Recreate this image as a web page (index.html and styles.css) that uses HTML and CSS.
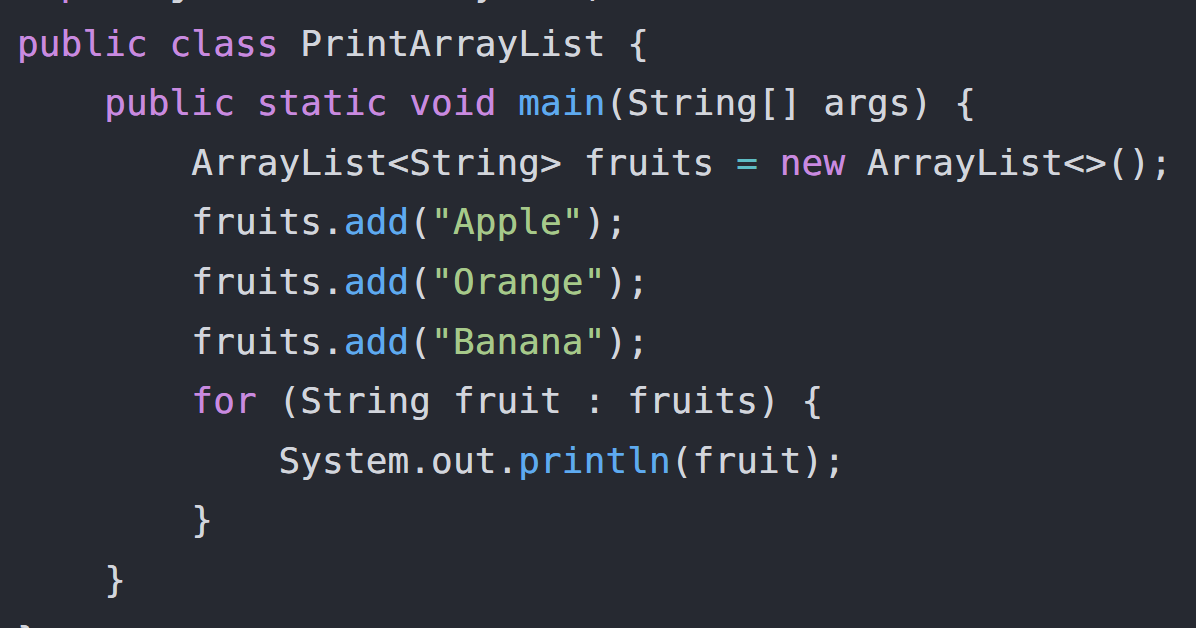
FILE: index.html
```html
<!DOCTYPE html>
<html lang="en">
<head>
<meta charset="utf-8">
<title>PrintArrayList.java</title>
<link rel="stylesheet" href="styles.css">
</head>
<body>
<main class="editor">
<pre class="code"><code><span class="kw">import</span> java.util.ArrayList;
<span class="kw">public</span> <span class="kw">class</span> PrintArrayList {
    <span class="kw">public</span> <span class="kw">static</span> <span class="kw">void</span> <span class="fn">main</span>(String[] args) {
        ArrayList&lt;String&gt; fruits <span class="op">=</span> <span class="kw">new</span> ArrayList&lt;&gt;();
        fruits.<span class="fn">add</span>(<span class="str">"Apple"</span>);
        fruits.<span class="fn">add</span>(<span class="str">"Orange"</span>);
        fruits.<span class="fn">add</span>(<span class="str">"Banana"</span>);
        <span class="kw">for</span> (String fruit : fruits) {
            System.out.<span class="fn">println</span>(fruit);
        }
    }
}</code></pre>
</main>
</body>
</html>
```
FILE: styles.css
```css
html, body {
  margin: 0;
  padding: 0;
  height: 100%;
  background: #262931;
  overflow: hidden;
}

.editor {
  width: 1196px;
  height: 628px;
  overflow: hidden;
  background: #262931;
}

.code {
  margin: -46px 0 0 0;
  padding: 0 0 0 17px;
  font-family: "DejaVu Sans Mono", "Liberation Mono", monospace;
  font-size: 36px;
  letter-spacing: 0.12px;
  line-height: 59.6px;
  color: #d2d5dc;
  white-space: pre;
  text-shadow: 0 0 0.6px currentColor;
}

.kw { color: #c98ae0; }
.fn { color: #5eaaf0; }
.str { color: #a6c98a; }
.op { color: #5ebcc4; }
```
